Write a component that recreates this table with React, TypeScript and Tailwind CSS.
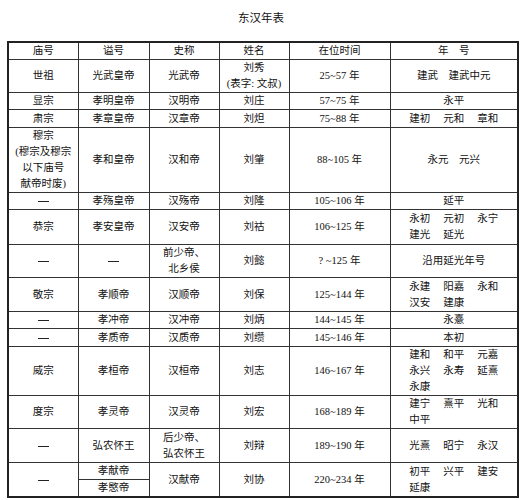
import React from "react";

type Row = {
  miao: React.ReactNode;
  shi: React.ReactNode;
  shicheng: React.ReactNode;
  name: React.ReactNode;
  time: string;
  nian: React.ReactNode;
  h: string;
};

function Names({ items }: { items: string[] }) {
  return (
    <div className="inline-grid grid-cols-[repeat(3,auto)] gap-x-[13px] text-left">
      {items.map((n, i) => (
        <span key={i}>{n}</span>
      ))}
    </div>
  );
}

const dash = <span className="inline-block w-[11px] border-t-[1.5px] border-[#222] align-middle" />;

const rows: Row[] = [
  {
    miao: "世祖",
    shi: "光武皇帝",
    shicheng: "光武帝",
    name: (
      <>
        刘秀
        <br />
        (表字: 文叔)
      </>
    ),
    time: "25~57 年",
    nian: <span>建武　建武中元</span>,
    h: "h-[33px]",
  },
  { miao: "显宗", shi: "孝明皇帝", shicheng: "汉明帝", name: "刘庄", time: "57~75 年", nian: "永平", h: "h-[17px]" },
  { miao: "肃宗", shi: "孝章皇帝", shicheng: "汉章帝", name: "刘炟", time: "75~88 年", nian: <Names items={["建初", "元和", "章和"]} />, h: "h-[18px]" },
  {
    miao: (
      <>
        穆宗
        <br />
        (穆宗及穆宗
        <br />
        以下庙号
        <br />
        献帝时废)
      </>
    ),
    shi: "孝和皇帝",
    shicheng: "汉和帝",
    name: "刘肇",
    time: "88~105 年",
    nian: <span>永元　元兴</span>,
    h: "h-[65px]",
  },
  { miao: dash, shi: "孝殇皇帝", shicheng: "汉殇帝", name: "刘隆", time: "105~106 年", nian: "延平", h: "h-[16px]" },
  { miao: "恭宗", shi: "孝安皇帝", shicheng: "汉安帝", name: "刘祜", time: "106~125 年", nian: <Names items={["永初", "元初", "永宁", "建光", "延光"]} />, h: "h-[35px]" },
  {
    miao: dash,
    shi: dash,
    shicheng: (
      <>
        前少帝、
        <br />
        北乡侯
      </>
    ),
    name: "刘懿",
    time: "? ~125 年",
    nian: "沿用延光年号",
    h: "h-[32px]",
  },
  { miao: "敬宗", shi: "孝顺帝", shicheng: "汉顺帝", name: "刘保", time: "125~144 年", nian: <Names items={["永建", "阳嘉", "永和", "汉安", "建康"]} />, h: "h-[34px]" },
  { miao: dash, shi: "孝冲帝", shicheng: "汉冲帝", name: "刘炳", time: "144~145 年", nian: "永憙", h: "h-[16px]" },
  { miao: dash, shi: "孝质帝", shicheng: "汉质帝", name: "刘缵", time: "145~146 年", nian: "本初", h: "h-[18px]" },
  { miao: "威宗", shi: "孝桓帝", shicheng: "汉桓帝", name: "刘志", time: "146~167 年", nian: <Names items={["建和", "和平", "元嘉", "永兴", "永寿", "延熹", "永康"]} />, h: "h-[49px]" },
  { miao: "度宗", shi: "孝灵帝", shicheng: "汉灵帝", name: "刘宏", time: "168~189 年", nian: <Names items={["建宁", "熹平", "光和", "中平"]} />, h: "h-[32px]" },
  {
    miao: dash,
    shi: "弘农怀王",
    shicheng: (
      <>
        后少帝、
        <br />
        弘农怀王
      </>
    ),
    name: "刘辩",
    time: "189~190 年",
    nian: <Names items={["光熹", "昭宁", "永汉"]} />,
    h: "h-[34px]",
  },
];

const td = "border border-[#333] p-0 text-center align-middle leading-[16px]";

export default function App() {
  return (
    <div className="w-[522px] h-[500px] bg-white px-[7px] text-[#111] font-['Liberation_Serif','Noto_Sans_CJK_SC',serif]">
      <div className="h-[41px] pt-[10px] text-center text-[11.5px] leading-[16px]">东汉年表</div>
      <table className="w-[510px] table-fixed border-collapse border-2 border-[#222] text-[10.5px]">
        <colgroup>
          <col className="w-[70px]" />
          <col className="w-[71px]" />
          <col className="w-[70px]" />
          <col className="w-[70px]" />
          <col className="w-[101px]" />
          <col className="w-[128px]" />
        </colgroup>
        <tbody>
          <tr className="h-[17px]">
            <td className={td}>庙号</td>
            <td className={td}>谥号</td>
            <td className={td}>史称</td>
            <td className={td}>姓名</td>
            <td className={td}>在位时间</td>
            <td className={td}>年　号</td>
          </tr>
          {rows.map((r, i) => (
            <tr key={i} className={r.h}>
              <td className={td}>{r.miao}</td>
              <td className={td}>{r.shi}</td>
              <td className={td}>{r.shicheng}</td>
              <td className={td}>{r.name}</td>
              <td className={td}>{r.time}</td>
              <td className={td}>{r.nian}</td>
            </tr>
          ))}
          <tr className="h-[17px]">
            <td className={td} rowSpan={2}>
              {dash}
            </td>
            <td className={td}>孝献帝</td>
            <td className={td} rowSpan={2}>
              汉献帝
            </td>
            <td className={td} rowSpan={2}>
              刘协
            </td>
            <td className={td} rowSpan={2}>
              220~234 年
            </td>
            <td className={td} rowSpan={2}>
              <Names items={["初平", "兴平", "建安", "延康"]} />
            </td>
          </tr>
          <tr className="h-[15px]">
            <td className={td}>孝愍帝</td>
          </tr>
        </tbody>
      </table>
    </div>
  );
}
